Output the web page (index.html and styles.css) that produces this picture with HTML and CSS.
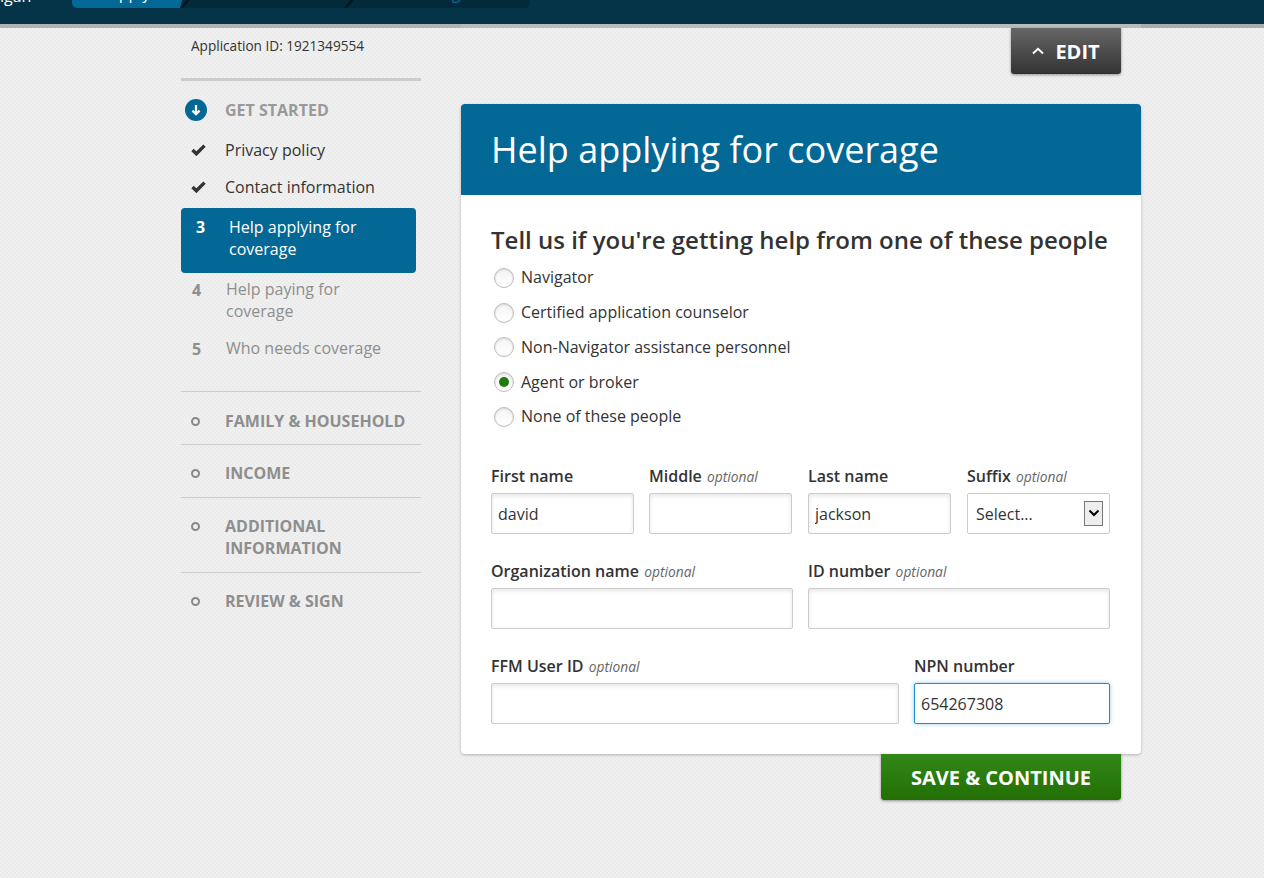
FILE: index.html
```html
<!DOCTYPE html>
<html lang="en">
<head>
	<meta charset="UTF-8">
	<title>Help applying for coverage</title>
	<link rel="stylesheet" href="styles.css">
</head>
<body>
	<div class="topbar">
		<div class="topbar-inner">
			<span class="state">Michigan</span>
			<div class="tabs">
				<span class="tab tab-on">Apply</span>
				<span class="tab tab-mid">Enroll</span>
				<span class="tab tab-last">Manage</span>
			</div>
		</div>
	</div>
	<div class="topbar-shade"></div>
	<div class="page">
		<div class="side">
			<p class="app-id">Application ID: 1921349554</p>
			<ul class="steps">
				<li class="step-head">
					<span class="mark"><svg class="down" width="22" height="22" viewBox="0 0 22 22"><circle cx="11" cy="11" r="11" fill="#036895"/><path d="M11 6v9M7.4 11.6 11 15.2l3.6-3.6" fill="none" stroke="#fff" stroke-width="2.2"/></svg></span>
					<span class="head-text">GET STARTED</span>
				</li>
				<li class="step done">
					<span class="mark"><svg width="15" height="12" viewBox="0 0 15 12"><path d="M1.5 6 5.4 9.8 13.5 1.6" fill="none" stroke="#333" stroke-width="3.4"/></svg></span>
					<span>Privacy policy</span>
				</li>
				<li class="step done">
					<span class="mark"><svg width="15" height="12" viewBox="0 0 15 12"><path d="M1.5 6 5.4 9.8 13.5 1.6" fill="none" stroke="#333" stroke-width="3.4"/></svg></span>
					<span>Contact information</span>
				</li>
				<li class="step current">
					<span class="num">3</span>
					<span>Help applying for coverage</span>
				</li>
				<li class="step todo">
					<span class="num">4</span>
					<span>Help paying for coverage</span>
				</li>
				<li class="step todo">
					<span class="num">5</span>
					<span>Who needs coverage</span>
				</li>
			</ul>
			<ul class="sections">
				<li><span class="ring"></span><span>FAMILY &amp; HOUSEHOLD</span></li>
				<li><span class="ring"></span><span>INCOME</span></li>
				<li><span class="ring"></span><span>ADDITIONAL INFORMATION</span></li>
				<li><span class="ring"></span><span>REVIEW &amp; SIGN</span></li>
			</ul>
		</div>
		<div class="main">
			<div class="edit-row">
				<a class="btn-edit"><svg width="12" height="8" viewBox="0 0 12 8"><path d="M1 6.5 6 1.8l5 4.7" fill="none" stroke="#fff" stroke-width="2"/></svg>EDIT</a>
			</div>
			<div class="card">
				<h1 class="card-title">Help applying for coverage</h1>
				<div class="card-body">
					<h2 class="question">Tell us if you're getting help from one of these people</h2>
					<div class="radios">
						<label class="radio"><span class="dot"></span>Navigator</label>
						<label class="radio"><span class="dot"></span>Certified application counselor</label>
						<label class="radio"><span class="dot"></span>Non-Navigator assistance personnel</label>
						<label class="radio"><span class="dot dot-on"></span>Agent or broker</label>
						<label class="radio"><span class="dot"></span>None of these people</label>
					</div>
					<div class="row row-names">
						<div class="field"><span class="lbl">First name</span><input class="inp" value="david"></div>
						<div class="field"><span class="lbl">Middle <em>optional</em></span><input class="inp"></div>
						<div class="field"><span class="lbl">Last name</span><input class="inp" value="jackson"></div>
						<div class="field"><span class="lbl">Suffix <em>optional</em></span>
							<div class="inp sel"><span class="sel-text">Select...</span><span class="sel-arrow"><svg width="12" height="8" viewBox="0 0 12 8"><path d="M1.5 1.5 6 6l4.5-4.5" fill="none" stroke="#000" stroke-width="2"/></svg></span></div>
						</div>
					</div>
					<div class="row row-org">
						<div class="field"><span class="lbl">Organization name <em>optional</em></span><input class="inp"></div>
						<div class="field"><span class="lbl">ID number <em>optional</em></span><input class="inp"></div>
					</div>
					<div class="row row-ffm">
						<div class="field"><span class="lbl">FFM User ID <em>optional</em></span><input class="inp"></div>
						<div class="field"><span class="lbl">NPN number</span><input class="inp inp-focus" value="654267308"></div>
					</div>
				</div>
			</div>
			<div class="save-row">
				<a class="btn-save">SAVE &amp; CONTINUE</a>
			</div>
		</div>
	</div>
</body>
</html>
```

FILE: styles.css
```css
*{
	margin:0;
	padding:0;
	box-sizing:border-box;
}
html,body{
	width:100%;
	height:100%;
}
body{
	font-family:"Open Sans","Liberation Sans",sans-serif;
	font-size:16px;
	color:#333;
	background-color:#eee;
	background-image:conic-gradient(#ebebeb 25%,#f0f0f0 0 50%,#ebebeb 0 75%,#f0f0f0 0);
	background-size:4px 4px;
	overflow:hidden;
}
ul{
	list-style:none;
}

.topbar{
	height:24px;
	overflow:hidden;
	background:#053449;
}
.topbar-inner{
	display:flex;
	height:24px;
	margin-top:-16px;
}
.state{
	width:82px;
	margin-left:-36px;
	color:#fff;
	line-height:24px;
	white-space:nowrap;
	flex:none;
}
.tabs{
	display:flex;
	width:458px;
	height:24px;
	margin-left:26px;
	background:#042a3a;
	border-radius:0 0 5px 5px;
	overflow:hidden;
}
.tab{
	line-height:19px;
	color:#0a6f9c;
	text-align:center;
}
.tab-on{
	width:115px;
	color:#fff;
	background:#036895;
	clip-path:polygon(0 0,100% 0,calc(100% - 7px) 100%,0 100%);
}
.tab-mid{
	width:167px;
	transform:skewX(-40deg);
	border-left:3px solid #02141c;
	border-right:3px solid #02141c;
	margin-left:3px;
}
.tab-last{
	flex:1;
	padding-right:8px;
}
.topbar-shade{
	height:4px;
	background:linear-gradient(to right,#b2b2b2 461px,#bababa 461px,#bababa 1141px,#acacac 1141px);
}

.page{
	display:grid;
	grid-template-columns:240px 680px;
	gap:40px;
	margin-left:181px;
}

.app-id{
	padding:8px 0 0 10px;
	font-size:13.6px;
	line-height:19px;
}
.steps{
	margin-top:23px;
	padding-top:18px;
	border-top:3px solid #ccc;
}
.step-head,.step{
	display:flex;
	line-height:22px;
}
.mark{
	display:flex;
	align-items:center;
	justify-content:center;
	width:30px;
	margin-right:14px;
	flex:none;
}
.head-text{
	font-weight:700;
	color:#999;
}
.step-head{
	margin-bottom:18px;
}
.step{
	margin-bottom:15px;
}
.step.done .mark{
	width:34px;
	margin-right:10px;
}
.current{
	width:235px;
	padding:8px 20px 13px 0;
	margin-top:-5px;
	margin-bottom:5px;
	background:#036895;
	color:#fff;
	border-radius:4px;
}
.num{
	width:38px;
	margin-right:10px;
	padding-left:15px;
	flex:none;
	font-weight:700;
}
.todo{
	color:#8e8e8e;
	padding-right:30px;
}
.todo .num{
	width:36px;
	height:22px;
	margin-right:9px;
	padding:1px 0 0 11px;
}
.todo:last-child{
	margin-bottom:0;
}
.sections{
	margin-top:32px;
}
.sections li{
	display:flex;
	align-items:flex-start;
	padding:17px 10px 13px 0;
	line-height:22px;
	font-weight:700;
	color:#8e8e8e;
	border-top:1px solid #ccc;
}
.sections li:first-child{
	padding:18px 10px 12px 0;
}
.ring{
	width:9px;
	height:9px;
	margin:7px 25px 0 10px;
	border:2px solid #888;
	border-radius:50%;
	flex:none;
}

.edit-row{
	display:flex;
	justify-content:flex-end;
	padding-right:20px;
	height:76px;
}
.btn-edit{
	display:flex;
	align-items:center;
	justify-content:center;
	gap:11px;
	width:110px;
	height:46px;
	font-size:20px;
	font-weight:700;
	color:#fff;
	background:linear-gradient(#666,#333);
	border-radius:0 0 3px 3px;
	box-shadow:0 1px 3px rgba(0,0,0,.4);
}
.card{
	height:650px;
	background:#fff;
	border-radius:4px;
	box-shadow:0 1px 3px rgba(0,0,0,.25);
}
.card-title{
	height:91px;
	padding:0 30px;
	font-size:36px;
	line-height:91px;
	font-weight:400;
	color:#fff;
	background:#036895;
	border-radius:4px 4px 0 0;
}
.card-body{
	padding:29px 30px 30px;
}
.question{
	font-size:24px;
	font-weight:600;
	line-height:32px;
	white-space:nowrap;
}
.radios{
	margin-top:4px;
}
.radio{
	display:flex;
	align-items:center;
	gap:7px;
	height:34.75px;
	padding-left:3px;
	line-height:22px;
}
.dot{
	display:flex;
	align-items:center;
	justify-content:center;
	width:20px;
	height:20px;
	margin-top:1px;
	background:linear-gradient(#f4f4f4,#fff);
	border:1px solid #bbb;
	border-radius:50%;
	box-shadow:inset 0 1px 2px rgba(0,0,0,.12);
}
.dot-on::after{
	content:"";
	width:10px;
	height:10px;
	background:#217a0c;
	border-radius:50%;
}
.row{
	display:grid;
	margin-top:25px;
}
.row-names{
	grid-template-columns:158px 159px 159px 143px;
	margin-top:30px;
}
.row-names .inp{
	width:143px;
}
.row-org{
	grid-template-columns:302px 302px;
	column-gap:15px;
}
.row-ffm{
	grid-template-columns:408px 196px;
	column-gap:15px;
}
.field{
	display:flex;
	flex-direction:column;
}
.lbl{
	height:24px;
	line-height:24px;
	font-weight:600;
	white-space:nowrap;
}
.lbl em{
	margin-left:1px;
	font-size:13.8px;
	font-weight:400;
	color:#666;
}
.inp{
	display:block;
	width:100%;
	height:41px;
	margin-top:5px;
	padding:2px 6px 0;
	font-family:inherit;
	font-size:16px;
	color:#333;
	background:#fff;
	border:1px solid #ccc;
	border-radius:2px;
	box-shadow:inset 0 2px 4px rgba(0,0,0,.1);
	outline:none;
}
.inp-focus{
	border-color:#1a8fd0;
	box-shadow:0 0 4px rgba(26,143,208,.45);
}
.sel{
	display:flex;
	align-items:center;
	justify-content:space-between;
	padding:0 6px 0 8px;
	box-shadow:none;
}
.sel-text{
	padding-top:2px;
}
.sel-arrow{
	display:flex;
	align-items:center;
	justify-content:center;
	width:19px;
	height:25px;
	background:#eee;
	border:1px solid #777;
}
.save-row{
	display:flex;
	justify-content:flex-end;
	padding-right:20px;
}
.btn-save{
	width:240px;
	height:46px;
	line-height:48px;
	text-align:center;
	font-size:20px;
	font-weight:700;
	color:#fff;
	background:linear-gradient(#318716,#236f05);
	border-radius:0 0 3px 3px;
	box-shadow:0 1px 3px rgba(0,0,0,.4);
}
```
